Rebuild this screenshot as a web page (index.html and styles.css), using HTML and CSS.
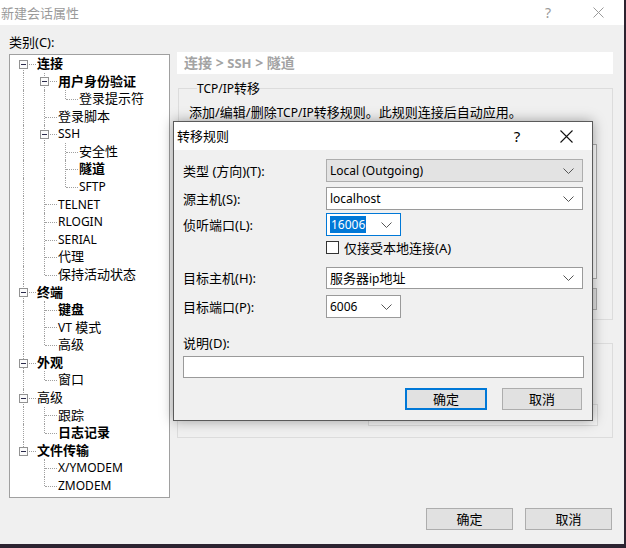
FILE: index.html
```html
<!DOCTYPE html>
<html lang="zh-CN">
<head>
<meta charset="utf-8">
<title>新建会话属性</title>
<link rel="stylesheet" href="styles.css">
</head>
<body>
<div class="window">
  <div class="titlebar">
    <span class="title">新建会话属性</span>
    <span class="tb-help">?</span>
    <span class="tb-close"><svg width="11" height="11" viewBox="0 0 11 11"><path d="M0.5 0.5L10.5 10.5M10.5 0.5L0.5 10.5" stroke="#9a9a9a" stroke-width="1" fill="none"/></svg></span>
  </div>
  <div class="content">
    <div class="leftcol">
      <div class="cat-label">类别(C):</div>
      <div class="tree">
        <div class="row"><span class="c down"><i class="box"></i></span><span class="t b">连接</span></div>
        <div class="row"><span class="g v"></span><span class="c full"><i class="box"></i></span><span class="t b">用户身份验证</span></div>
        <div class="row"><span class="g v"></span><span class="g v"></span><span class="c up"></span><span class="t">登录提示符</span></div>
        <div class="row"><span class="g v"></span><span class="c full"></span><span class="t">登录脚本</span></div>
        <div class="row"><span class="g v"></span><span class="c full"><i class="box"></i></span><span class="t en">SSH</span></div>
        <div class="row"><span class="g v"></span><span class="g v"></span><span class="c full"></span><span class="t">安全性</span></div>
        <div class="row"><span class="g v"></span><span class="g v"></span><span class="c full"></span><span class="t b">隧道</span></div>
        <div class="row"><span class="g v"></span><span class="g v"></span><span class="c up"></span><span class="t en">SFTP</span></div>
        <div class="row"><span class="g v"></span><span class="c full"></span><span class="t en">TELNET</span></div>
        <div class="row"><span class="g v"></span><span class="c full"></span><span class="t en">RLOGIN</span></div>
        <div class="row"><span class="g v"></span><span class="c full"></span><span class="t en">SERIAL</span></div>
        <div class="row"><span class="g v"></span><span class="c full"></span><span class="t">代理</span></div>
        <div class="row"><span class="g v"></span><span class="c up"></span><span class="t">保持活动状态</span></div>
        <div class="row"><span class="c full"><i class="box"></i></span><span class="t b">终端</span></div>
        <div class="row"><span class="g v"></span><span class="c full"></span><span class="t b">键盘</span></div>
        <div class="row"><span class="g v"></span><span class="c full"></span><span class="t"><span class="en">VT</span> 模式</span></div>
        <div class="row"><span class="g v"></span><span class="c up"></span><span class="t">高级</span></div>
        <div class="row"><span class="c full"><i class="box"></i></span><span class="t b">外观</span></div>
        <div class="row"><span class="g v"></span><span class="c up"></span><span class="t">窗口</span></div>
        <div class="row"><span class="c full"><i class="box"></i></span><span class="t">高级</span></div>
        <div class="row"><span class="g v"></span><span class="c full"></span><span class="t">跟踪</span></div>
        <div class="row"><span class="g v"></span><span class="c up"></span><span class="t b">日志记录</span></div>
        <div class="row"><span class="c up"><i class="box"></i></span><span class="t b">文件传输</span></div>
        <div class="row"><span class="g"></span><span class="c full"></span><span class="t en">X/YMODEM</span></div>
        <div class="row"><span class="g"></span><span class="c up"></span><span class="t en">ZMODEM</span></div>
      </div>
    </div>
    <div class="rightcol">
      <div class="crumb">连接 &gt; <span class="en">SSH</span> &gt; 隧道</div>
      <fieldset class="group g1">
        <legend><span class="en">TCP/IP</span>转移</legend>
        <div class="desc">添加/编辑/删除<span class="en">TCP/IP</span>转移规则。此规则连接后自动应用。</div>
        <div class="listbox"></div>
        <div class="btnrow">
          <span class="btn small"></span>
          <span class="btn small"></span>
          <span class="btn small"></span>
        </div>
      </fieldset>
      <div class="group g2">
        <div class="g2row"><span class="tbox"></span></div>
      </div>
    </div>
  </div>
  <div class="footer">
    <span class="btn main">确定</span>
    <span class="btn main">取消</span>
  </div>

  <div class="dialog">
    <div class="dlg-title">
      <span class="dlg-name">转移规则</span>
      <span class="dlg-help">?</span>
      <span class="dlg-close"><svg width="13" height="13" viewBox="0 0 13 13"><path d="M0.5 0.5L12.5 12.5M12.5 0.5L0.5 12.5" stroke="#111" stroke-width="1.1" fill="none"/></svg></span>
    </div>
    <div class="dlg-body">
      <div class="frow r1">
        <span class="flabel">类型 (方向)(T):</span>
        <span class="combo wide list"><span class="val en">Local (Outgoing)</span><svg class="chev" width="11" height="6" viewBox="0 0 11 6"><path d="M0.5 0.5L5.5 5.5L10.5 0.5" stroke="#555" fill="none"/></svg></span>
      </div>
      <div class="frow r2">
        <span class="flabel">源主机(S):</span>
        <span class="combo wide"><span class="val en">localhost</span><svg class="chev" width="11" height="6" viewBox="0 0 11 6"><path d="M0.5 0.5L5.5 5.5L10.5 0.5" stroke="#555" fill="none"/></svg></span>
      </div>
      <div class="frow r3">
        <span class="flabel">侦听端口(L):</span>
        <span class="combo narrow focus"><span class="val en"><span class="sel">16006</span></span><svg class="chev" width="11" height="6" viewBox="0 0 11 6"><path d="M0.5 0.5L5.5 5.5L10.5 0.5" stroke="#555" fill="none"/></svg></span>
      </div>
      <div class="frow r4">
        <span class="flabel"></span>
        <span class="check"></span><span class="clabel">仅接受本地连接(A)</span>
      </div>
      <div class="frow r5">
        <span class="flabel">目标主机(H):</span>
        <span class="combo wide"><span class="val">服务器<span class="en">ip</span>地址</span><svg class="chev" width="11" height="6" viewBox="0 0 11 6"><path d="M0.5 0.5L5.5 5.5L10.5 0.5" stroke="#555" fill="none"/></svg></span>
      </div>
      <div class="frow r6">
        <span class="flabel">目标端口(P):</span>
        <span class="combo narrow"><span class="val en">6006</span><svg class="chev" width="11" height="6" viewBox="0 0 11 6"><path d="M0.5 0.5L5.5 5.5L10.5 0.5" stroke="#555" fill="none"/></svg></span>
      </div>
      <div class="note-label">说明(D):</div>
      <div class="note-box"></div>
      <div class="dlg-btns">
        <span class="btn dbtn default">确定</span>
        <span class="btn dbtn">取消</span>
      </div>
    </div>
  </div>
</div>
</body>
</html>
```

FILE: styles.css
```css
* { box-sizing: border-box; }
html, body { margin: 0; padding: 0; }
body {
  background: #2c2330;
  font-family: "Noto Sans", "Noto Sans CJK SC", sans-serif;
  font-size: 13px;
  color: #000;
  width: 626px;
  height: 548px;
  overflow: hidden;
}
.en { font-size: 12px; }
.window {
  position: relative;
  width: 624px;
  height: 544px;
  background: #f0f0f0;
  display: flex;
  flex-direction: column;
}
.titlebar {
  height: 25px;
  background: #fff;
  display: flex;
  align-items: center;
  color: #9a9a9a;
}
.title { flex: 1; padding-left: 1px; line-height: 18px; }
.tb-help { width: 48px; text-align: center; font-size: 14px; line-height: 18px; }
.tb-close { width: 52px; display: flex; justify-content: center; }

.content {
  display: flex;
  padding: 8px 11px 0 9px;
  gap: 7px;
}
.leftcol { width: 161px; flex: none; }
.cat-label { line-height: 18px; margin-bottom: 3px; }
.tree {
  height: 444px;
  background: #fff;
  border: 1px solid #a0a0a0;
  padding: 0 0 0 3px;
}
.row {
  height: 17.58px;
  display: flex;
  align-items: stretch;
  line-height: 17px;
  white-space: nowrap;
}
.g, .c { position: relative; width: 21px; flex: none; }
.g.v::before, .c::before {
  content: "";
  position: absolute;
  left: 10px;
  border-left: 1px dotted #a0a0a0;
}
.g.v::before, .c.full::before { top: 0; bottom: 0; }
.c.up::before { top: 0; height: 50%; }
.c.down::before { top: 50%; bottom: 0; }
.c::after {
  content: "";
  position: absolute;
  left: 11px;
  right: -2px;
  top: 50%;
  border-top: 1px dotted #a0a0a0;
}
.box {
  position: absolute;
  left: 6px;
  top: 50%;
  margin-top: -4px;
  width: 9px;
  height: 9px;
  border: 1px solid #929292;
  background: #fbfbfb;
  z-index: 1;
}
.box::after {
  content: "";
  position: absolute;
  left: 1px;
  right: 1px;
  top: 3px;
  height: 1px;
  background: #2a2a4a;
}
.t { margin-left: 3px; }
.t.en { font-size: 12px; }
.t.b { font-weight: 700; }

.rightcol { flex: 1; min-width: 0; padding-top: 19px; }
.crumb {
  height: 22px;
  background: #fff;
  color: #a3a3a3;
  font-weight: 700;
  font-size: 14px;
  line-height: 22px;
  padding-left: 7px;
}
.crumb .en { font-size: 13px; }
.group {
  margin: 0;
  min-width: 0;
  border: 1px solid #dcdcdc;
  padding: 0;
}
.group legend {
  padding: 0;
  margin-left: 8px;
  line-height: 18px;
}
.g1 { margin-top: 5px; padding: 5px 15px 9px 10px; margin-left: 1px; }
.desc { line-height: 18px; }
.listbox {
  margin-top: 22px;
  height: 135px;
  background: #fff;
  border: 1px solid #adadad;
}
.btnrow {
  margin-top: 9px;
  display: flex;
  justify-content: flex-end;
  gap: 8px;
}
.btn {
  display: flex;
  align-items: center;
  justify-content: center;
  height: 22px;
  background: #e1e1e1;
  border: 1px solid #adadad;
  line-height: 18px;
}
.btn.small { width: 76px; }
.g2 { margin-top: 23px; padding: 60px 14px 11px 10px; }
.g2row { display: flex; justify-content: flex-end; }
.tbox { width: 230px; height: 22px; background: #f4f4f4; border: 1px solid #dadada; }

.footer {
  margin-top: auto;
  display: flex;
  justify-content: flex-end;
  gap: 12px;
  padding: 0 12px 14px 0;
}
.btn.main { width: 87px; }

/* dialog */
.dialog {
  position: absolute;
  left: 173px;
  top: 121px;
  width: 420px;
  height: 300px;
  border: 1px solid #5a5a5a;
  background: #f0f0f0;
  box-shadow: 0 0 12px rgba(0, 0, 0, 0.35);
}
.dlg-title {
  height: 28px;
  background: #fff;
  display: flex;
  align-items: center;
}
.dlg-name { flex: 1; padding-left: 3px; line-height: 18px; }
.dlg-help { width: 46px; text-align: center; font-size: 15px; line-height: 18px; }
.dlg-close { width: 52px; display: flex; justify-content: center; }
.dlg-body { padding: 9px 9px 0 9px; }
.frow { display: flex; align-items: center; }
.flabel { width: 143px; flex: none; line-height: 18px; }
.r1, .r2, .r3, .r6 { height: 23px; }
.r2 { margin-top: 5px; }
.r3 { margin-top: 3px; }
.r4 { margin-top: 5px; height: 13px; }
.r5 { margin-top: 13px; height: 22px; }
.r6 { margin-top: 6px; }
.combo {
  height: 100%;
  display: flex;
  align-items: center;
  background: #fff;
  border: 1px solid #9a9a9a;
  padding: 0 8px 0 3px;
}
.combo.wide { width: 257px; }
.combo.narrow { width: 75px; }
.combo.list { background: #e3e3e3; border-color: #adadad; }
.combo.focus { border-color: #0078d7; }
.val { flex: 1; line-height: 18px; white-space: nowrap; }
.sel { background: #0078d7; color: #fff; padding: 0 1px; display: inline-block; line-height: 17px; }
.chev { flex: none; }
.check {
  width: 13px;
  height: 13px;
  border: 1px solid #333;
  background: #fff;
  flex: none;
}
.clabel { margin-left: 5px; line-height: 18px; }
.note-label { margin-top: 16px; line-height: 18px; }
.note-box {
  margin-top: 4px;
  width: 401px;
  height: 22px;
  background: #fff;
  border: 1px solid #9a9a9a;
}
.dlg-btns {
  margin-top: 10px;
  display: flex;
  justify-content: flex-end;
  gap: 15px;
  padding-right: 1px;
}
.btn.dbtn { width: 80px; }
.btn.default { width: 82px; border: 2px solid #0078d7; }
```
